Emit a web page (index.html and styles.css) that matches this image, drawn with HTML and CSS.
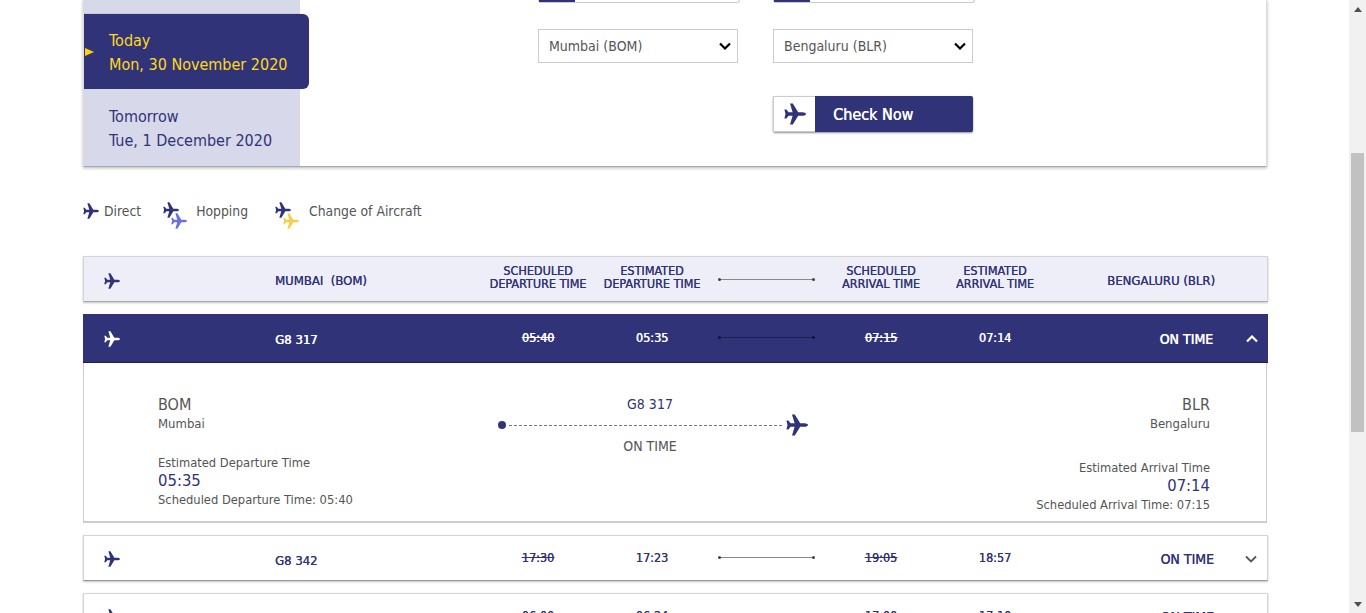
FILE: index.html
```html
<!DOCTYPE html>
<html lang="en">
<head>
  <meta charset="UTF-8" />
  <title>Flight Status</title>
  <link rel="stylesheet" href="styles.css">
</head>
<body>
  <svg class="defs" width="0" height="0">
    <symbol id="plane" viewBox="0 0 22 22">
      <path d="M22 11c0-1-1.800-1.800-3.600-1.800h-4.200L8.800.5H6l2.600 8.700H4.600L2.400 6.500H.4L1.500 11 .4 15.500h2l2.200-2.700h4L6 21.500h2.800l5.400-8.700h4.200c1.800 0 3.600-.8 3.600-1.800z"/>
    </symbol>
  </svg>

  <div class="page">
    <main class="content">
      <section class="panel">
        <div class="days">
          <div class="day-stub"></div>
          <div class="day day-active">
            <span class="day-arrow"></span>
            Today<br>Mon, 30 November 2020
          </div>
          <div class="day">Tomorrow<br>Tue, 1 December 2020</div>
        </div>
        <div class="filters">
          <div class="filter-row">
            <div class="stub"><span></span></div>
            <div class="stub"><span></span></div>
          </div>
          <div class="filter-row select-row">
            <div class="select">
              <select><option>Mumbai (BOM)</option></select>
              <svg class="select-arrow" viewBox="0 0 12 8"><path d="M1 1.500l5 5 5-5"/></svg>
            </div>
            <div class="select">
              <select><option>Bengaluru (BLR)</option></select>
              <svg class="select-arrow" viewBox="0 0 12 8"><path d="M1 1.500l5 5 5-5"/></svg>
            </div>
          </div>
          <button class="check" type="button">
            <span class="check-icon"><svg class="icon-check"><use href="#plane"/></svg></span>
            <span class="check-label">Check Now</span>
          </button>
        </div>
      </section>

      <div class="legend">
        <span class="legend-item direct"><svg class="icon-legend"><use href="#plane"/></svg>Direct</span>
        <span class="legend-item hopping">
          <span class="pair"><svg class="icon-legend"><use href="#plane"/></svg><svg class="icon-legend second violet"><use href="#plane"/></svg></span>Hopping
        </span>
        <span class="legend-item change">
          <span class="pair"><svg class="icon-legend"><use href="#plane"/></svg><svg class="icon-legend second amber"><use href="#plane"/></svg></span>Change of Aircraft
        </span>
      </div>

      <div class="row head">
        <div class="cell-icon"><svg class="icon-row"><use href="#plane"/></svg></div>
        <div class="flight">MUMBAI&nbsp; (BOM)</div>
        <div class="time">SCHEDULED<br>DEPARTURE TIME</div>
        <div class="time">ESTIMATED<br>DEPARTURE TIME</div>
        <div class="line"></div>
        <div class="time">SCHEDULED<br>ARRIVAL TIME</div>
        <div class="time">ESTIMATED<br>ARRIVAL TIME</div>
        <div class="status">BENGALURU (BLR)</div>
        <div></div>
      </div>

      <div class="row active">
        <div class="cell-icon"><svg class="icon-row"><use href="#plane"/></svg></div>
        <div class="flight">G8 317</div>
        <div class="time"><s>05:40</s></div>
        <div class="time">05:35</div>
        <div class="line"></div>
        <div class="time"><s>07:15</s></div>
        <div class="time">07:14</div>
        <div class="status">ON TIME</div>
        <div class="cell-chevron"><svg class="chevron" viewBox="0 0 12 8"><path d="M1 6.500l5-5 5 5"/></svg></div>
      </div>

      <div class="detail">
        <div class="side">
          <div class="code">BOM</div>
          <div class="city">Mumbai</div>
          <div class="label label-first">Estimated Departure Time</div>
          <div class="clock">05:35</div>
          <div class="label">Scheduled Departure Time: 05:40</div>
        </div>
        <div class="route">
          <div class="route-flight">G8 317</div>
          <div class="route-line">
            <span class="route-dot"></span>
            <span class="route-dash"></span>
            <svg class="icon-route"><use href="#plane"/></svg>
          </div>
          <div class="route-status">ON TIME</div>
        </div>
        <div class="side side-right">
          <div class="code">BLR</div>
          <div class="city">Bengaluru</div>
          <div class="label label-first">Estimated Arrival Time</div>
          <div class="clock">07:14</div>
          <div class="label">Scheduled Arrival Time: 07:15</div>
        </div>
      </div>

      <div class="row flat">
        <div class="cell-icon"><svg class="icon-row"><use href="#plane"/></svg></div>
        <div class="flight">G8 342</div>
        <div class="time"><s>17:30</s></div>
        <div class="time">17:23</div>
        <div class="line"></div>
        <div class="time"><s>19:05</s></div>
        <div class="time">18:57</div>
        <div class="status">ON TIME</div>
        <div class="cell-chevron"><svg class="chevron" viewBox="0 0 12 8"><path d="M1 1.500l5 5 5-5"/></svg></div>
      </div>

      <div class="row flat">
        <div class="cell-icon"><svg class="icon-row"><use href="#plane"/></svg></div>
        <div class="flight">G8 519 - G8 398</div>
        <div class="time"><s>06:00</s></div>
        <div class="time">06:24</div>
        <div class="line"></div>
        <div class="time"><s>17:00</s></div>
        <div class="time">17:10</div>
        <div class="status">ON TIME</div>
        <div class="cell-chevron"><svg class="chevron" viewBox="0 0 12 8"><path d="M1 1.500l5 5 5-5"/></svg></div>
      </div>
    </main>

    <div class="scrollbar">
      <div class="scroll-up"></div>
      <div class="thumb"></div>
      <div class="scroll-down"></div>
    </div>
  </div>
</body>
</html>
```

FILE: styles.css
```css
html, body {
  margin: 0;
  height: 613px;
  overflow: hidden;
}
body {
  font-family: "DejaVu Sans Condensed", "DejaVu Sans", sans-serif;
  font-stretch: condensed;
  color: #313378;
  background: #fff;
}
.defs {
  position: absolute;
}
svg {
  fill: currentColor;
  display: block;
}
.page {
  display: flex;
  height: 613px;
}
.content {
  flex: 1;
  padding-left: 83px;
  min-width: 0;
}

/* top panel */
.panel {
  display: flex;
  width: 1184px;
  height: 167px;
  box-sizing: border-box;
  border-left: 1px solid #ddd;
  border-right: 1px solid #ddd;
  border-bottom: 1px solid #aaa;
  box-shadow: 0 1px 3px rgba(0,0,0,0.3);
}
.days {
  width: 216px;
  background: #d7d8ea;
  font-size: 16px;
  line-height: 24px;
}
.day-stub {
  height: 13px;
  border-bottom: 1px solid #c8c8d4;
}
.day {
  padding: 15px 0 13px 25px;
}
.day-active {
  position: relative;
  margin-right: -9px;
  padding-bottom: 12px;
  margin-bottom: 1px;
  background: #313378;
  color: #ffd91a;
  border-radius: 0 6px 6px 0;
}
.day-arrow {
  position: absolute;
  left: 1px;
  top: 34px;
  border-left: 9px solid #ffd400;
  border-top: 4.500px solid transparent;
  border-bottom: 4.500px solid transparent;
}
.filters {
  margin-left: 238px;
}
.filter-row {
  display: grid;
  grid-template-columns: 200px 200px;
  column-gap: 35px;
}
.stub {
  width: 202px;
  height: 3px;
  box-sizing: border-box;
  border: 1px solid #ccc;
  border-top: 0;
  border-radius: 0 0 3px 3px;
}
.stub span {
  display: block;
  width: 36px;
  height: 2px;
  background: #313378;
}
.select-row {
  margin-top: 26px;
}
.select {
  position: relative;
}
select {
  appearance: none;
  display: block;
  width: 200px;
  height: 34px;
  padding-left: 10px;
  font: inherit;
  font-size: 14px;
  color: #555;
  background: #fff;
  border: 1px solid #ccc;
  border-radius: 0;
}
.select-arrow {
  position: absolute;
  right: 7px;
  top: 13px;
  width: 12px;
  height: 8px;
  fill: none;
  stroke: #000;
  stroke-width: 2.200;
  pointer-events: none;
}
.check {
  display: flex;
  width: 200px;
  height: 36px;
  margin: 33px 0 0 235px;
  padding: 0;
  border: 0;
  border-radius: 2px;
  background: #313378;
  box-shadow: 0 1px 2px rgba(0,0,0,0.45);
  font: inherit;
  color: #fff;
}
.check-icon {
  display: flex;
  align-items: center;
  justify-content: center;
  width: 42px;
  height: 36px;
  box-sizing: border-box;
  background: #fff;
  border: 1px solid #ccc;
  border-right: 0;
  color: #313378;
}
.icon-check {
  width: 22px;
  height: 22px;
}
.check-label {
  margin-left: 18px;
  font-size: 16px;
  line-height: 37px;
  text-shadow: 0.4px 0 0 #fff;
}

/* legend */
.legend {
  display: flex;
  align-items: center;
  height: 87px;
  margin-bottom: 2px;
  font-size: 13.800px;
  color: #555;
}
.legend-item {
  display: flex;
  align-items: center;
}
.icon-legend {
  width: 16px;
  height: 16px;
  color: #313378;
}
.direct .icon-legend {
  margin-right: 5px;
}
.hopping {
  margin-left: 22px;
}
.change {
  margin-left: 27px;
}
.pair {
  position: relative;
  display: block;
  width: 24px;
  height: 26px;
  margin-right: 10px;
}
.hopping .pair {
  margin-right: 9px;
}
.pair .icon-legend {
  position: absolute;
  left: 0;
  top: 4px;
}
.pair .second {
  left: 8px;
  top: 15px;
}
.violet {
  color: #6f70e0;
}
.amber {
  color: #f6d04d;
}

/* flight rows */
.row {
  display: grid;
  grid-template-columns: 191px 206px 114px 114px 115px 114px 114px 162px 1fr;
  align-items: center;
  width: 1185px;
  box-sizing: border-box;
  margin-bottom: 12px;
  text-shadow: 0.2px 0 0 currentColor;
  font-size: 14px;
}
.head {
  height: 46px;
  padding-top: 3px;
  background: #edeef7;
  border: 1px solid #d5d5d5;
  border-bottom-color: #aaa;
  box-shadow: 0 1px 2px rgba(0,0,0,0.25);
}
.active {
  height: 49px;
  padding: 1px 0 0 1px;
  margin-bottom: 0;
  background: #313378;
  color: #fff;
  border-bottom: 1px solid #1d1e52;
}
.flat {
  height: 46px;
  padding-top: 2px;
  background: #fff;
  border: 1px solid #d5d5d5;
  border-bottom-color: #999;
  box-shadow: 0 1px 2px rgba(0,0,0,0.25);
}
.cell-icon {
  padding-left: 20px;
}
.icon-row {
  width: 16px;
  height: 16px;
}
.flight {
  font-size: 13px;
}
.flat .flight {
  margin-top: 2px;
}
.time {
  font-size: 12.500px;
  line-height: 13px;
  text-align: center;
}
.head .time {
  margin-bottom: 7px;
}
.head .status {
  font-size: 13px;
  margin-right: -1px;
}
.active .time {
  margin-bottom: 2px;
}
.flat .time {
  margin-bottom: 3px;
}
.active .time, .active .flight, .active .status {
  text-shadow: 0.5px 0 0 #fff;
}
.active .flight {
  margin-top: 1px;
}
.active .status {
  margin-right: 1px;
}
.line {
  position: relative;
  height: 1px;
  margin: 0 9px 2px 9px;
  background: #888;
}
.flat .line {
  margin-bottom: 4px;
}
.line::before, .line::after {
  content: "";
  position: absolute;
  top: -1px;
  width: 3px;
  height: 3px;
  border-radius: 50%;
  background: #444;
}
.line::before {
  left: 0;
}
.line::after {
  right: 0;
}
.active .line {
  background: #1d1e52;
}
.active .line::before, .active .line::after {
  background: #14143c;
}
.status {
  text-align: right;
}
.cell-chevron {
  display: flex;
  justify-content: flex-end;
  padding-right: 10px;
}
.chevron {
  width: 12px;
  height: 8px;
  fill: none;
  stroke: #555;
  stroke-width: 1.800;
}
.active .chevron {
  stroke: #fff;
  stroke-width: 2.200;
}

/* open row detail */
.detail {
  display: flex;
  width: 1184px;
  height: 160px;
  box-sizing: border-box;
  margin-bottom: 12px;
  padding: 32px 56px 0 74px;
  border: 1px solid #ccc;
  border-top: 0;
  border-bottom-width: 2px;
  font-size: 14px;
  color: #555;
}
.side {
  width: 340px;
  line-height: 18px;
}
.side-right {
  flex: 1;
  text-align: right;
}
.code {
  font-size: 16px;
  line-height: 20px;
}
.city {
  font-size: 13px;
}
.label {
  font-size: 12.800px;
}
.label-first {
  margin-top: 21px;
}
.side-right .label-first {
  margin-top: 26px;
}
.clock {
  margin-top: -1px;
  font-size: 16.500px;
  line-height: 20px;
  color: #313378;
}
.route {
  width: 310px;
  margin-top: -1px;
  padding-right: 6px;
  box-sizing: border-box;
  text-align: center;
  line-height: 20px;
}
.route-flight {
  color: #313378;
}
.route-line {
  display: flex;
  align-items: center;
  height: 22px;
  margin-right: -6px;
}
.route-dot {
  width: 8px;
  height: 8px;
  border-radius: 50%;
  background: #313378;
}
.route-dash {
  flex: 1;
  margin: 0 4px 0 3px;
  border-top: 1px dashed #777;
}
.icon-route {
  width: 22px;
  height: 22px;
  color: #313378;
}

/* fake browser scrollbar */
.scrollbar {
  position: relative;
  width: 17px;
  height: 613px;
  background: #f1f1f1;
}
.thumb {
  width: 13px;
  height: 279px;
  margin: 153px 0 0 2px;
  background: #c1c1c1;
  float: left;
}
.scroll-up, .scroll-down {
  position: absolute;
  left: 5px;
  border-left: 4px solid transparent;
  border-right: 4px solid transparent;
}
.scroll-up {
  top: 7px;
  border-bottom: 5px solid #505050;
}
.scroll-down {
  bottom: 6px;
  border-top: 5px solid #505050;
}
```
